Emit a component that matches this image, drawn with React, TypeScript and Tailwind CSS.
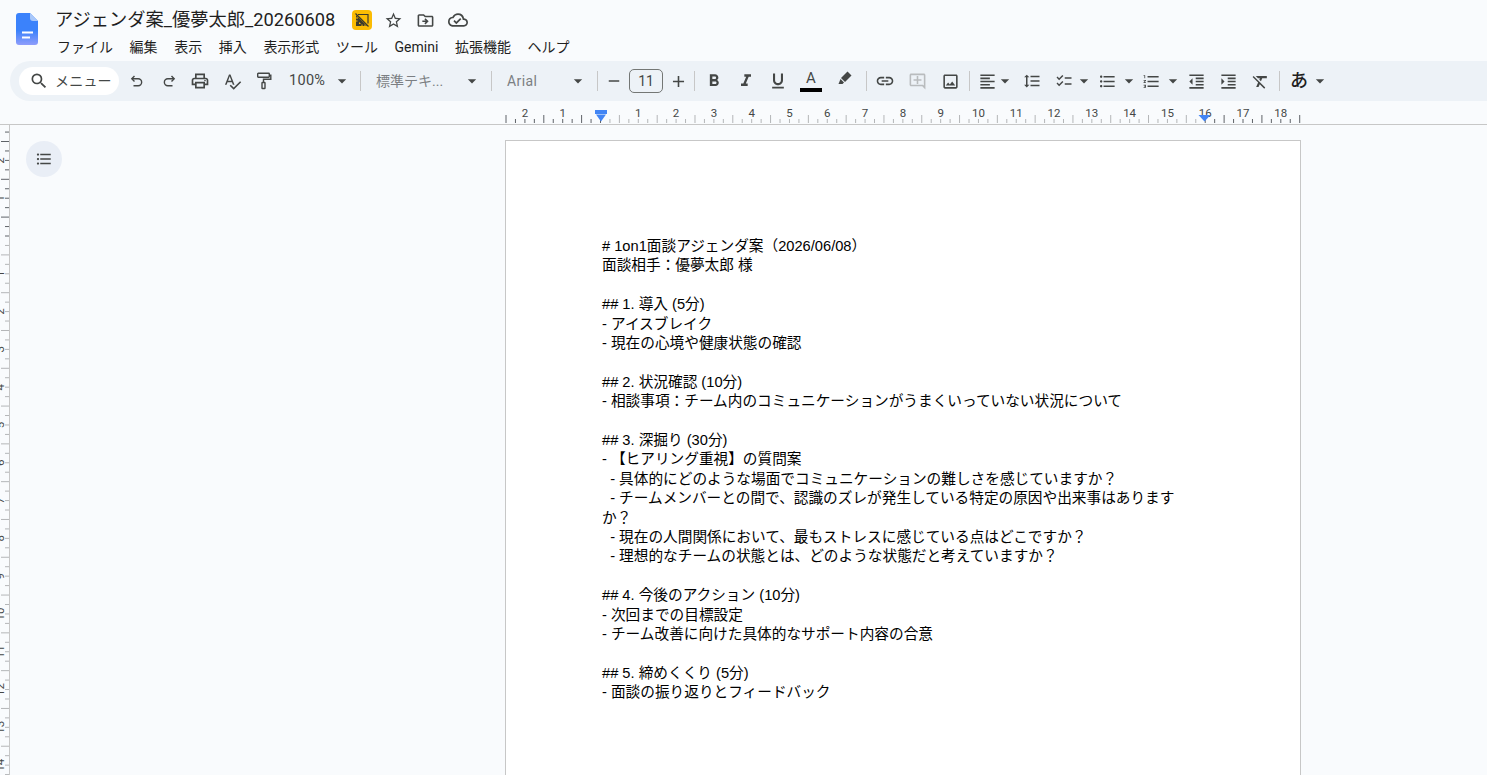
import type { ReactNode } from "react";
import {
  MdAdd,
  MdArrowDropDown,
  MdChecklist,
  MdFormatAlignLeft,
  MdFormatBold,
  MdFormatClear,
  MdFormatIndentDecrease,
  MdFormatIndentIncrease,
  MdFormatItalic,
  MdFormatLineSpacing,
  MdFormatListBulleted,
  MdFormatListNumbered,
  MdFormatUnderlined,
  MdLink,
  MdOutlineAddComment,
  MdOutlineCloudDone,
  MdOutlineDriveFileMove,
  MdOutlineImage,
  MdOutlinePrint,
  MdOutlineStarBorder,
  MdRemove,
  MdSearch,
  MdSpellcheck,
} from "react-icons/md";

const UI_FONT = "font-['Roboto','Noto_Sans_CJK_JP',sans-serif]";

const MENUS = ["ファイル", "編集", "表示", "挿入", "表示形式", "ツール", "Gemini", "拡張機能", "ヘルプ"];

const DOC_LINES = [
  "# 1on1面談アジェンダ案（2026/06/08）",
  "面談相手：優夢太郎 様",
  "",
  "## 1. 導入 (5分)",
  "- アイスブレイク",
  "- 現在の心境や健康状態の確認",
  "",
  "## 2. 状況確認 (10分)",
  "- 相談事項：チーム内のコミュニケーションがうまくいっていない状況について",
  "",
  "## 3. 深掘り (30分)",
  "- 【ヒアリング重視】の質問案",
  "  - 具体的にどのような場面でコミュニケーションの難しさを感じていますか？",
  "  - チームメンバーとの間で、認識のズレが発生している特定の原因や出来事はあります",
  "か？",
  "  - 現在の人間関係において、最もストレスに感じている点はどこですか？",
  "  - 理想的なチームの状態とは、どのような状態だと考えていますか？",
  "",
  "## 4. 今後のアクション (10分)",
  "- 次回までの目標設定",
  "- チーム改善に向けた具体的なサポート内容の合意",
  "",
  "## 5. 締めくくり (5分)",
  "- 面談の振り返りとフィードバック",
];

function DocsLogo() {
  return (
    <svg width="22" height="32" viewBox="0 0 22 32" className="shrink-0">
      <defs>
        <linearGradient id="docs-grad" x1="0" y1="0" x2="0" y2="1">
          <stop offset="0.55" stopColor="#3b82fb" />
          <stop offset="1" stopColor="#8f9dfb" />
        </linearGradient>
      </defs>
      <path d="M3 0h11l8 8v21a3 3 0 0 1-3 3H3a3 3 0 0 1-3-3V3a3 3 0 0 1 3-3z" fill="url(#docs-grad)" />
      <path d="M14 0l8 8h-5a3 3 0 0 1-3-3z" fill="#a8c7fa" />
      <rect x="6" y="18.5" width="11" height="2" fill="#fff" />
      <rect x="6" y="23.5" width="8" height="2" fill="#fff" />
    </svg>
  );
}

function OfflineBadge() {
  return (
    <div className="ml-[17px] flex h-5 w-5 items-center justify-center rounded-[4px] bg-[#fbbc04]">
      <svg width="18" height="18" viewBox="0 0 18 18">
        <path d="M3 4v11h11z" fill="#3c3a2c" />
        <path d="M6 11v2h2z" fill="#fbbc04" />
        <path d="M3 7h2M3 10h1.5M9 15v-1.5M12 15v-1.5" stroke="#fbbc04" strokeWidth="1" />
        <path d="M2.5 2.5l13 13" stroke="#3c3a2c" strokeWidth="1.3" />
        <path d="M5 3.5h10v9" stroke="#3c3a2c" strokeWidth="1.2" fill="none" />
      </svg>
    </div>
  );
}

function Sep({ className }: { className: string }) {
  return <div className={`h-5 w-px shrink-0 bg-[#c7c7c7] ${className}`} />;
}

function Btn({ className, children }: { className: string; children: ReactNode }) {
  return <div className={`flex h-7 shrink-0 items-center justify-center text-[#444746] ${className}`}>{children}</div>;
}

function Arrow({ className = "" }: { className?: string }) {
  return (
    <div className={`flex w-[10px] shrink-0 justify-center text-[#444746] ${className}`}>
      <MdArrowDropDown size={20} className="shrink-0" />
    </div>
  );
}

function Dropdown({ className, label, labelClass }: { className: string; label: string; labelClass: string }) {
  return (
    <div className={`flex h-7 shrink-0 items-center justify-between ${className}`}>
      <span className={labelClass}>{label}</span>
      <Arrow className="mr-[5px]" />
    </div>
  );
}

function UndoIcon({ flip }: { flip?: boolean }) {
  return (
    <svg width="16" height="16" viewBox="0 0 16 16" fill="none" stroke="#444746" strokeWidth="1.4" className={flip ? "-scale-x-100" : ""}>
      <path d="M5.5 3L2.8 5.8l2.7 2.7" />
      <path d="M3 5.8h6.2a3.4 3.4 0 0 1 0 6.9H4.5" />
    </svg>
  );
}

function PaintRoller() {
  return (
    <svg width="18" height="20" viewBox="0 0 18 20" fill="none" stroke="#444746" strokeWidth="1.4">
      <rect x="2.7" y="2.2" width="11.6" height="4" rx="0.6" />
      <path d="M14.3 4.2h1.5v4H8.5v3" />
      <rect x="7" y="11.5" width="3" height="6" rx="0.5" />
    </svg>
  );
}

function Highlighter() {
  return (
    <svg width="18" height="18" viewBox="0 0 18 18" className="-translate-y-[3px]">
      <path d="M11.5 2.5l4 4-6.5 6.5-4-4z" fill="#444746" />
      <path d="M4.5 10l3.5 3.5-1.5 1.5H2.5z" fill="#444746" />
    </svg>
  );
}

function Toolbar() {
  return (
    <div className="ml-[10px] flex h-10 items-center rounded-l-[20px] bg-[#edf2f7] pl-[9px]">
      <div className="flex h-7 w-[100px] shrink-0 items-center rounded-full bg-white pl-[10px] text-[#444746]">
        <MdSearch size={20} />
        <span className="ml-[6px] text-[14px] tracking-[0.2px]">メニュー</span>
      </div>
      <Btn className="ml-[2px] w-8"><UndoIcon /></Btn>
      <Btn className="w-[31px]"><UndoIcon flip /></Btn>
      <Btn className="w-8"><MdOutlinePrint size={20} /></Btn>
      <Btn className="w-8"><MdSpellcheck size={19} /></Btn>
      <Btn className="w-8"><PaintRoller /></Btn>
      <Dropdown className="w-[72px] pl-[9px]" label="100%" labelClass="text-[14.5px] tracking-[0.3px] text-[#444746]" />
      <Sep className="ml-2 mr-[7px]" />
      <Dropdown className="w-[114px] pl-2" label="標準テキ..." labelClass="text-[14px] text-[#7b7f83]" />
      <Sep className="ml-[9px]" />
      <Dropdown className="w-[96px] pl-[15px]" label="Arial" labelClass="text-[14px] tracking-[0.4px] text-[#7b7f83]" />
      <Sep className="ml-[9px]" />
      <Btn className="w-[31px]"><MdRemove size={18} /></Btn>
      <div className="flex h-[24px] w-[34px] shrink-0 items-center justify-center rounded-[5px] border border-[#747775] text-[14px] text-[#444746]">
        11
      </div>
      <Btn className="w-[30px]"><MdAdd size={19} /></Btn>
      <Sep className="ml-px" />
      <Btn className="ml-[3px] w-8"><MdFormatBold size={20} /></Btn>
      <Btn className="w-[31px]"><MdFormatItalic size={20} /></Btn>
      <Btn className="ml-px w-8"><MdFormatUnderlined size={20} /></Btn>
      <div className="ml-px flex h-7 w-8 shrink-0 flex-col items-center justify-center text-[#444746]">
        <span className="font-['Roboto',sans-serif] text-[15px] leading-[15px]">A</span>
        <div className="mt-[2px] h-[4px] w-[22px] bg-black" />
      </div>
      <Btn className="ml-[2px] w-8"><Highlighter /></Btn>
      <Sep className="ml-[5px]" />
      <Btn className="ml-[2px] w-8"><MdLink size={20} /></Btn>
      <Btn className="w-8"><span className="text-[#b9bcbe]"><MdOutlineAddComment size={19} /></span></Btn>
      <Btn className="ml-px w-8"><MdOutlineImage size={19} /></Btn>
      <Sep className="ml-[3px]" />
      <Btn className="ml-[4px] w-[26px]"><MdFormatAlignLeft size={19} /></Btn>
      <Arrow />
      <Btn className="ml-[6px] w-8"><MdFormatLineSpacing size={18} /></Btn>
      <Btn className="w-8"><MdChecklist size={18} /></Btn>
      <Arrow className="-ml-px" />
      <Btn className="ml-[5px] w-[26px]"><MdFormatListBulleted size={19} /></Btn>
      <Arrow className="ml-[4px]" />
      <Btn className="ml-[4px] w-[26px]"><MdFormatListNumbered size={19} /></Btn>
      <Arrow className="ml-[4px]" />
      <Btn className="ml-[2px] w-8"><MdFormatIndentDecrease size={19} /></Btn>
      <Btn className="w-8"><MdFormatIndentIncrease size={19} /></Btn>
      <Btn className="w-8"><MdFormatClear size={19} /></Btn>
      <Sep className="ml-[3px]" />
      <span className="ml-[10px] text-[18px] font-medium leading-7 text-[#1f1f1f]">あ</span>
      <Arrow className="ml-[7px]" />
    </div>
  );
}

// 1 cm = 37.8px, a tick every quarter
const CM = 37.795;

function HorizontalRuler() {
  const zero = 95.5;
  const right = 699.5;
  const ticks = [];
  for (let i = -10; i <= 74; i++) {
    const x = zero + (i * CM) / 4;
    if (x < 0 || x > 797) continue;
    const half = ((i % 4) + 4) % 4 === 2;
    const inside = x > zero + 1 && x < right - 1;
    ticks.push(
      <line
        key={i}
        x1={x}
        x2={x}
        y1={half ? 14 : 18}
        y2={22}
        stroke={inside ? "#b4b6b8" : "#5f6368"}
        strokeWidth="1"
      />
    );
  }
  const labels = [];
  for (let n = -2; n <= 18; n++) {
    if (n === 0) continue;
    labels.push(
      <text key={n} x={zero + n * CM} y={16} textAnchor="middle" fontSize="11.5" fontFamily="Roboto, sans-serif" fill="#444746">
        {Math.abs(n)}
      </text>
    );
  }
  return (
    <svg width="800" height="23" viewBox="0 0 800 23" className="block">
      {ticks}
      {labels}
      <rect x={zero - 5.5} y="9" width="12" height="4" fill="#4285f4" />
      <path d={`M${zero - 4.5} 13.5h10l-5 7z`} fill="#4285f4" />
      <path d={`M${right - 6} 14h12l-6 6.5z`} fill="#4285f4" />
    </svg>
  );
}

function VerticalRuler() {
  // offset from the top of this ruler: y=125 on the page
  const zero = 111;
  const ticks = [];
  const labels = [];
  for (let i = -4 * 3; i <= 4 * 17; i++) {
    const y = zero + (i * CM) / 4;
    if (y < 0 || y > 650) continue;
    const mod = ((i % 4) + 4) % 4;
    ticks.push(
      <line
        key={i}
        x1={mod === 2 ? 1 : 5}
        x2={9}
        y1={y}
        y2={y}
        stroke={i > 0 ? "#b4b6b8" : "#5f6368"}
        strokeWidth="1"
      />
    );
    if (mod === 0 && i !== 0) {
      labels.push(
        <text
          key={i}
          transform={`translate(4 ${y}) rotate(-90)`}
          textAnchor="middle"
          fontSize="11.5"
          fontFamily="Roboto, sans-serif"
          fill="#444746"
        >
          {Math.abs(i / 4)}
        </text>
      );
    }
  }
  return (
    <svg width="9" height="650" viewBox="0 0 9 650" className="block shrink-0">
      {ticks}
      {labels}
    </svg>
  );
}

export default function App() {
  return (
    <div className={`flex h-[775px] w-[1487px] flex-col overflow-hidden bg-[#f9fbfd] ${UI_FONT}`}>
      <header className="flex h-[61px] shrink-0 pl-[16px]">
        <div className="pt-[13px]">
          <DocsLogo />
        </div>
        <div className="ml-[17px] flex flex-col pt-[8px]">
          <div className="flex h-[24px] items-center">
            <span className="text-[18.25px] leading-6 text-[#1f1f1f]">アジェンダ案_優夢太郎_20260608</span>
            <OfflineBadge />
            <MdOutlineStarBorder size={19} className="ml-[12px] text-[#444746]" />
            <MdOutlineDriveFileMove size={19} className="ml-[13px] text-[#444746]" />
            <MdOutlineCloudDone size={20} className="ml-[13px] text-[#444746]" />
          </div>
          <nav className="ml-[2px] mt-[3px] flex gap-[16.6px] text-[14px] leading-6 text-[#1f1f1f]">
            {MENUS.map((m) => (
              <span key={m}>{m}</span>
            ))}
          </nav>
        </div>
      </header>

      <Toolbar />

      <div className="ml-[505px] h-[23px] shrink-0">
        <HorizontalRuler />
      </div>

      <main className="flex min-h-0 flex-1 border-t border-[#c7c7c7] pt-0">
        <VerticalRuler />
        <div className="flex flex-1 border-l border-[#c7c7c7]">
          <div className="w-[495px] shrink-0 pl-4 pt-4">
            <div className="flex h-9 w-9 items-center justify-center rounded-full bg-[#e9eef6] text-[#444746]">
              <MdFormatListBulleted size={18} />
            </div>
          </div>
          <div className="mt-[15px] h-[800px] w-[796px] shrink-0 border border-[#c7c7c7] bg-white pl-[96px] pr-[96px] pt-[96px]">
            <div className="whitespace-pre-wrap font-['Liberation_Sans','Noto_Sans_CJK_JP',sans-serif] text-[14.67px] leading-[19.4px] text-black">
              {DOC_LINES.map((l, i) => (
                <div key={i} className="min-h-[19.4px]">
                  {l}
                </div>
              ))}
            </div>
          </div>
        </div>
      </main>
    </div>
  );
}
